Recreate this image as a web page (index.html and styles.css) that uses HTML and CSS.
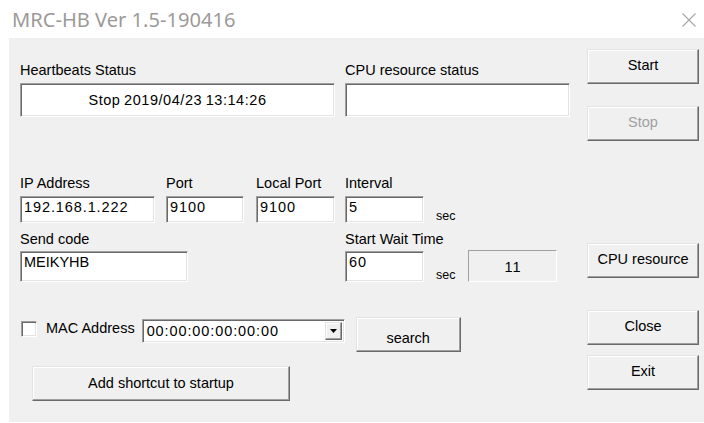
FILE: index.html
```html
<!DOCTYPE html>
<html lang="en">
<head>
<meta charset="utf-8">
<title>MRC-HB Ver 1.5-190416</title>
<link rel="stylesheet" href="styles.css">
</head>
<body>
<div class="window">
  <header class="titlebar">
    <span class="title">MRC-HB Ver 1.5-190416</span>
    <svg class="close" width="14" height="14" viewBox="0 0 14 14" aria-label="Close">
      <path d="M0.5 0.5L13.5 13.5M13.5 0.5L0.5 13.5"/>
    </svg>
  </header>

  <main class="dialog">
    <section class="form">
      <div class="row row-status">
        <div class="field f-hb">
          <span class="label">Heartbeats Status</span>
          <div class="edit h-status center stamp">Stop 2019/04/23 13:14:26</div>
        </div>
        <div class="field f-cpu">
          <span class="label">CPU resource status</span>
          <div class="edit h-status"></div>
        </div>
      </div>

      <div class="row row-net">
        <div class="field f-ip">
          <span class="label">IP Address</span>
          <div class="edit h-net num">192.168.1.222</div>
        </div>
        <div class="field f-port">
          <span class="label">Port</span>
          <div class="edit h-net num">9100</div>
        </div>
        <div class="field f-lport">
          <span class="label">Local Port</span>
          <div class="edit h-net num">9100</div>
        </div>
        <div class="field f-int">
          <span class="label">Interval</span>
          <div class="edit h-net num">5</div>
        </div>
        <span class="unit">sec</span>
      </div>

      <div class="row row-code">
        <div class="field f-code">
          <span class="label">Send code</span>
          <div class="edit h-code">MEIKYHB</div>
        </div>
        <div class="field f-wait">
          <span class="label">Start Wait Time</span>
          <div class="edit h-code num">60</div>
        </div>
        <span class="unit">sec</span>
        <div class="static num">11</div>
      </div>

      <div class="row row-mac">
        <span class="check"></span>
        <span class="check-label">MAC Address</span>
        <div class="combo">
          <span class="combo-text num">00:00:00:00:00:00</span>
          <span class="combo-btn">
            <svg width="7" height="4" viewBox="0 0 7 4"><path d="M0 0H7L3.5 4Z"/></svg>
          </span>
        </div>
        <button class="btn btn-search">search</button>
      </div>

      <div class="row row-shortcut">
        <button class="btn btn-shortcut">Add shortcut to startup</button>
      </div>
    </section>

    <aside class="actions">
      <button class="btn side b-start">Start</button>
      <button class="btn side b-stop" disabled>Stop</button>
      <button class="btn side b-cpu">CPU resource</button>
      <button class="btn side b-close">Close</button>
      <button class="btn side b-exit">Exit</button>
    </aside>
  </main>
</div>
</body>
</html>
```

FILE: styles.css
```css
* { box-sizing: border-box; }

html, body {
  margin: 0;
  padding: 0;
  background: #ffffff;
}

body {
  width: 704px;
  height: 423px;
  overflow: hidden;
  font-family: "Liberation Sans", Arial, sans-serif;
  font-size: 14.5px;
  color: #000;
}

.window {
  display: flex;
  flex-direction: column;
  height: 423px;
}

/* ---- caption ---- */
.titlebar {
  height: 38px;
  display: flex;
  align-items: center;
  justify-content: space-between;
  padding: 0 8px 0 12px;
}

.title {
  font-family: "Noto Sans", "Open Sans", sans-serif;
  font-size: 20.1px;
  color: #9c9a98;
  margin-top: 1px;
}

.close {
  margin-top: 1px;
}
.close path {
  stroke: #a6a6a6;
  stroke-width: 1.1;
  fill: none;
}

/* ---- client area ---- */
.dialog {
  margin-left: 9px;
  height: 384px;
  background: #f0f0f0;
  display: flex;
}

.form {
  width: 578px;
  padding-left: 11px;
  display: flex;
  flex-direction: column;
}

.row {
  display: flex;
  align-items: flex-end;
}

.field {
  display: flex;
  flex-direction: column;
}

.label {
  line-height: 16px;
  height: 16px;
  white-space: nowrap;
}

/* sunken edit control */
.edit {
  background: #fff;
  border-top: 1px solid #a0a0a0;
  border-left: 1px solid #a0a0a0;
  border-bottom: 1px solid #ffffff;
  border-right: 1px solid #ffffff;
  box-shadow: inset 1px 1px 0 #696969, inset -1px -1px 0 #e3e3e3;
  padding: 0 3px;
  white-space: nowrap;
  display: flex;
  align-items: center;
}
.edit.center { justify-content: center; }

/* digits of the dialog font run wider than Arial's */
.num { letter-spacing: 0.9px; }
.stamp { letter-spacing: 0.55px; word-spacing: -1px; }

/* row 1 */
.row-status { margin-top: 24px; }
.row-status .label { margin-bottom: 5px; }
.h-status { height: 34px; }
.f-hb { width: 315px; margin-right: 10px; }
.f-cpu { width: 225px; }

/* row 2 */
.row-net { margin-top: 58px; }
.row-net .label { margin-bottom: 5px; }
.h-net { height: 27px; align-items: flex-start; padding-top: 2px; }
.f-ip { width: 135px; margin-right: 11px; }
.f-port { width: 78px; margin-right: 12px; }
.f-lport { width: 79px; margin-right: 10px; }
.f-int { width: 79px; }

.unit {
  font-size: 12.5px;
  line-height: 14px;
  margin-left: 12px;
  margin-bottom: 0;
}

/* row 3 */
.row-code { margin-top: 8px; }
.row-code .label { margin-bottom: 4px; }
.h-code { height: 31px; align-items: flex-start; padding-top: 2px; }
.f-code { width: 168px; margin-right: 157px; }
.f-wait { width: 79px; }

.static {
  width: 89px;
  height: 32px;
  margin-left: 13px;
  border-top: 1px solid #a0a0a0;
  border-left: 1px solid #a0a0a0;
  border-bottom: 1px solid #ffffff;
  border-right: 1px solid #ffffff;
  display: flex;
  align-items: center;
  justify-content: center;
  padding-top: 1px;
}

/* row 4 */
.row-mac {
  margin-top: 36px;
  align-items: flex-start;
}

.check {
  width: 16px;
  height: 16px;
  margin-top: 3px;
  margin-left: 1px;
  background: #fff;
  border-top: 1px solid #a0a0a0;
  border-left: 1px solid #a0a0a0;
  border-bottom: 1px solid #ffffff;
  border-right: 1px solid #ffffff;
  box-shadow: inset 1px 1px 0 #696969, inset -1px -1px 0 #e3e3e3;
}

.check-label {
  margin-left: 9px;
  margin-top: 2px;
  line-height: 16px;
}

.combo {
  width: 203px;
  height: 24px;
  margin-left: 7px;
  margin-top: 1px;
  background: #fff;
  border-top: 1px solid #a0a0a0;
  border-left: 1px solid #a0a0a0;
  border-bottom: 1px solid #ffffff;
  border-right: 1px solid #ffffff;
  box-shadow: inset 1px 1px 0 #696969, inset -1px -1px 0 #e3e3e3;
  display: flex;
  align-items: stretch;
  padding: 2px;
}

.combo-text {
  flex: 1;
  line-height: 18px;
  padding-left: 2px;
}

.combo-btn {
  width: 17px;
  background: #f0f0f0;
  border-top: 1px solid #e3e3e3;
  border-left: 1px solid #e3e3e3;
  border-bottom: 1px solid #696969;
  border-right: 1px solid #696969;
  box-shadow: inset -1px -1px 0 #a0a0a0, inset 1px 1px 0 #ffffff;
  display: flex;
  align-items: center;
  justify-content: center;
}
.combo-btn path { fill: #000; }

/* raised push button */
.btn {
  font-family: "Liberation Sans", Arial, sans-serif;
  font-size: 14.5px;
  color: #000;
  background: #f0f0f0;
  border-top: 1px solid #e3e3e3;
  border-left: 1px solid #e3e3e3;
  border-bottom: 1px solid #696969;
  border-right: 1px solid #696969;
  box-shadow: inset -1px -1px 0 #a0a0a0, inset 1px 1px 0 #ffffff;
  padding: 0;
  margin: 0;
  display: flex;
  align-items: center;
  justify-content: center;
  padding-bottom: 3px;
}
.btn:disabled { color: #a0a0a0; }

.btn-search {
  width: 105px;
  height: 35px;
  margin-left: 11px;
  margin-top: -1px;
  padding-top: 6px;
  padding-bottom: 0;
}

.row-shortcut { margin-top: 14px; }
.btn-shortcut {
  width: 258px;
  height: 35px;
  margin-left: 12px;
  padding-top: 2px;
}

/* right button column */
.actions {
  display: flex;
  flex-direction: column;
  padding-top: 11px;
}

.side {
  width: 112px;
  height: 35px;
}
.b-stop { margin-top: 22px; }
.b-cpu { margin-top: 102px; }
.b-close { margin-top: 32px; }
.b-exit { margin-top: 10px; }
```
